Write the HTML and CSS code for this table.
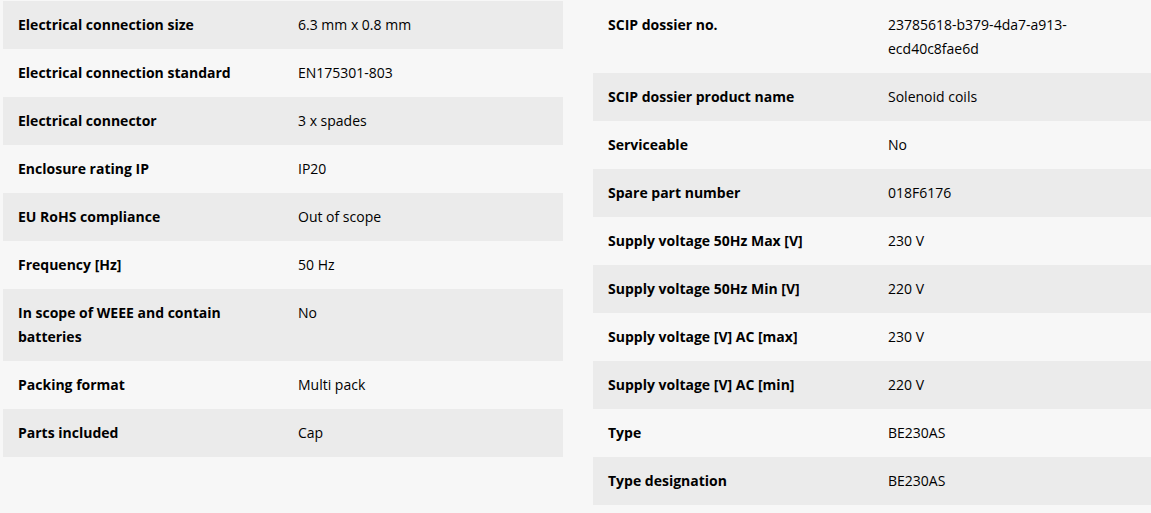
FILE: index.html
```html
<!DOCTYPE html>
<html lang="en">
<head>
<meta charset="utf-8">
<title>Specifications</title>
<link rel="stylesheet" href="styles.css">
</head>
<body>
<div class="specs">
  <div class="spec-table">
    <div class="row alt"><div class="label">Electrical connection size</div><div class="value">6.3 mm x 0.8 mm</div></div>
    <div class="row"><div class="label">Electrical connection standard</div><div class="value">EN175301-803</div></div>
    <div class="row alt"><div class="label">Electrical connector</div><div class="value">3 x spades</div></div>
    <div class="row"><div class="label">Enclosure rating IP</div><div class="value">IP20</div></div>
    <div class="row alt"><div class="label">EU RoHS compliance</div><div class="value">Out of scope</div></div>
    <div class="row"><div class="label">Frequency [Hz]</div><div class="value">50 Hz</div></div>
    <div class="row alt"><div class="label">In scope of WEEE and contain batteries</div><div class="value">No</div></div>
    <div class="row"><div class="label">Packing format</div><div class="value">Multi pack</div></div>
    <div class="row alt"><div class="label">Parts included</div><div class="value">Cap</div></div>
  </div>
  <div class="spec-table">
    <div class="row"><div class="label">SCIP dossier no.</div><div class="value">23785618-b379-4da7-a913-ecd40c8fae6d</div></div>
    <div class="row alt"><div class="label">SCIP dossier product name</div><div class="value">Solenoid coils</div></div>
    <div class="row"><div class="label">Serviceable</div><div class="value">No</div></div>
    <div class="row alt"><div class="label">Spare part number</div><div class="value">018F6176</div></div>
    <div class="row"><div class="label">Supply voltage 50Hz Max [V]</div><div class="value">230 V</div></div>
    <div class="row alt"><div class="label">Supply voltage 50Hz Min [V]</div><div class="value">220 V</div></div>
    <div class="row"><div class="label">Supply voltage [V] AC [max]</div><div class="value">230 V</div></div>
    <div class="row alt"><div class="label">Supply voltage [V] AC [min]</div><div class="value">220 V</div></div>
    <div class="row"><div class="label">Type</div><div class="value">BE230AS</div></div>
    <div class="row alt"><div class="label">Type designation</div><div class="value">BE230AS</div></div>
  </div>
</div>
</body>
</html>
```
FILE: styles.css
```css
html, body {
  margin: 0;
  padding: 0;
  background: #f7f7f7;
  overflow: hidden;
}
body {
  font-family: "Open Sans", "Noto Sans", sans-serif;
  font-size: 14px;
  line-height: 24px;
  color: #000;
}
.specs {
  display: flex;
  align-items: flex-start;
  gap: 30px;
  padding-top: 1px;
  padding-left: 3px;
}
.spec-table {
  width: 560px;
  flex-shrink: 0;
}
.row {
  display: grid;
  grid-template-columns: 280px 280px;
}
.row.alt {
  background: #ebebeb;
}
.label, .value {
  padding: 12px 15px;
}
.label {
  font-weight: 700;
}
```
